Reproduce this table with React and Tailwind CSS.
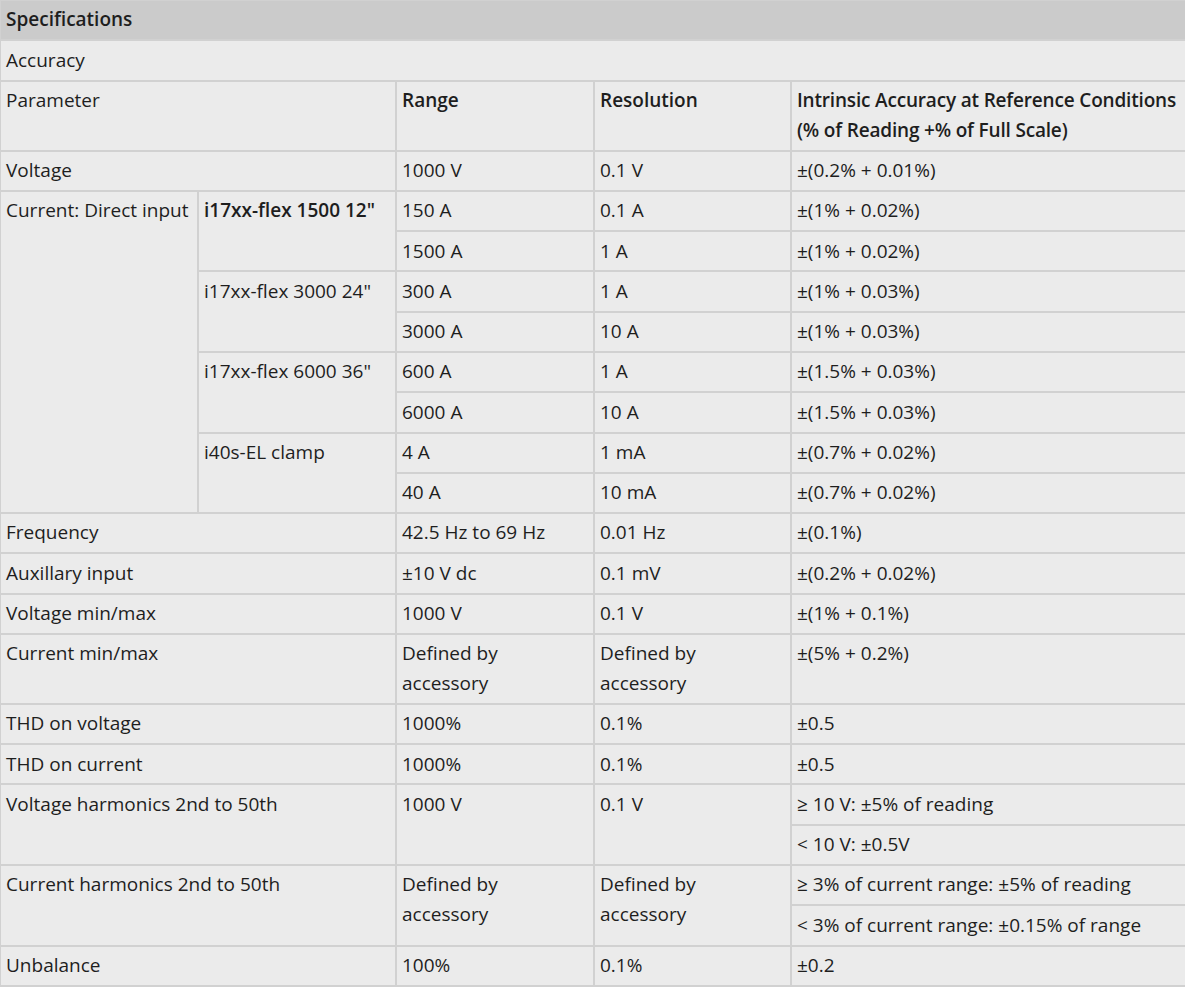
import React from "react";

const td = "border-2 border-[#d1d1d1] align-top pl-[5px] pr-[9px] pt-[4.4px] pb-[4.2px]";

export default function App() {
  return (
    <div
      className="w-[1185px] bg-white text-[#1e1e1e] text-[19px] leading-[29.7px]"
      style={{ fontFamily: '"Open Sans", "Noto Sans", sans-serif' }}
    >
      <table className="w-[1187px] table-fixed border-collapse bg-[#ebebeb] -ml-px -mt-px">
        <colgroup>
          <col className="w-[198px]" />
          <col className="w-[198px]" />
          <col className="w-[198px]" />
          <col className="w-[197px]" />
          <col className="w-[198px]" />
          <col className="w-[198px]" />
        </colgroup>
        <tbody>
          <tr>
            <td colSpan={6} className={`${td} bg-[#cbcbcb] font-semibold`}>
              Specifications
            </td>
          </tr>
          <tr>
            <td colSpan={6} className={td}>Accuracy</td>
          </tr>
          <tr>
            <td colSpan={2} className={td}>Parameter</td>
            <td className={`${td} font-semibold`}>Range</td>
            <td className={`${td} font-semibold`}>Resolution</td>
            <td colSpan={2} className={`${td} font-semibold whitespace-nowrap tracking-[-0.18px]`}>
              Intrinsic Accuracy at Reference Conditions
              <br />
              (% of Reading +% of Full Scale)
            </td>
          </tr>
          <tr>
            <td colSpan={2} className={td}>Voltage</td>
            <td className={td}>1000 V</td>
            <td className={td}>0.1 V</td>
            <td colSpan={2} className={td}>±(0.2% + 0.01%)</td>
          </tr>
          <tr>
            <td rowSpan={8} className={`${td} whitespace-nowrap`}>Current: Direct input</td>
            <td rowSpan={2} className={`${td} font-semibold whitespace-nowrap`}>i17xx-flex 1500 12"</td>
            <td className={td}>150 A</td>
            <td className={td}>0.1 A</td>
            <td colSpan={2} className={td}>±(1% + 0.02%)</td>
          </tr>
          <tr>
            <td className={td}>1500 A</td>
            <td className={td}>1 A</td>
            <td colSpan={2} className={td}>±(1% + 0.02%)</td>
          </tr>
          <tr>
            <td rowSpan={2} className={`${td} whitespace-nowrap`}>i17xx-flex 3000 24"</td>
            <td className={td}>300 A</td>
            <td className={td}>1 A</td>
            <td colSpan={2} className={td}>±(1% + 0.03%)</td>
          </tr>
          <tr>
            <td className={td}>3000 A</td>
            <td className={td}>10 A</td>
            <td colSpan={2} className={td}>±(1% + 0.03%)</td>
          </tr>
          <tr>
            <td rowSpan={2} className={`${td} whitespace-nowrap`}>i17xx-flex 6000 36"</td>
            <td className={td}>600 A</td>
            <td className={td}>1 A</td>
            <td colSpan={2} className={td}>±(1.5% + 0.03%)</td>
          </tr>
          <tr>
            <td className={td}>6000 A</td>
            <td className={td}>10 A</td>
            <td colSpan={2} className={td}>±(1.5% + 0.03%)</td>
          </tr>
          <tr>
            <td rowSpan={2} className={td}>i40s-EL clamp</td>
            <td className={td}>4 A</td>
            <td className={td}>1 mA</td>
            <td colSpan={2} className={td}>±(0.7% + 0.02%)</td>
          </tr>
          <tr>
            <td className={td}>40 A</td>
            <td className={td}>10 mA</td>
            <td colSpan={2} className={td}>±(0.7% + 0.02%)</td>
          </tr>
          <tr>
            <td colSpan={2} className={td}>Frequency</td>
            <td className={`${td} whitespace-nowrap`}>42.5 Hz to 69 Hz</td>
            <td className={td}>0.01 Hz</td>
            <td colSpan={2} className={td}>±(0.1%)</td>
          </tr>
          <tr>
            <td colSpan={2} className={td}>Auxillary input</td>
            <td className={td}>±10 V dc</td>
            <td className={td}>0.1 mV</td>
            <td colSpan={2} className={td}>±(0.2% + 0.02%)</td>
          </tr>
          <tr>
            <td colSpan={2} className={td}>Voltage min/max</td>
            <td className={td}>1000 V</td>
            <td className={td}>0.1 V</td>
            <td colSpan={2} className={td}>±(1% + 0.1%)</td>
          </tr>
          <tr>
            <td colSpan={2} className={td}>Current min/max</td>
            <td className={td}>Defined by<br />accessory</td>
            <td className={td}>Defined by<br />accessory</td>
            <td colSpan={2} className={td}>±(5% + 0.2%)</td>
          </tr>
          <tr>
            <td colSpan={2} className={td}>THD on voltage</td>
            <td className={td}>1000%</td>
            <td className={td}>0.1%</td>
            <td colSpan={2} className={td}>±0.5</td>
          </tr>
          <tr>
            <td colSpan={2} className={td}>THD on current</td>
            <td className={td}>1000%</td>
            <td className={td}>0.1%</td>
            <td colSpan={2} className={td}>±0.5</td>
          </tr>
          <tr>
            <td colSpan={2} rowSpan={2} className={td}>Voltage harmonics 2nd to 50th</td>
            <td rowSpan={2} className={td}>1000 V</td>
            <td rowSpan={2} className={td}>0.1 V</td>
            <td colSpan={2} className={td}>≥ 10 V: ±5% of reading</td>
          </tr>
          <tr>
            <td colSpan={2} className={td}>&lt; 10 V: ±0.5V</td>
          </tr>
          <tr>
            <td colSpan={2} rowSpan={2} className={td}>Current harmonics 2nd to 50th</td>
            <td rowSpan={2} className={td}>Defined by<br />accessory</td>
            <td rowSpan={2} className={td}>Defined by<br />accessory</td>
            <td colSpan={2} className={td}>≥ 3% of current range: ±5% of reading</td>
          </tr>
          <tr>
            <td colSpan={2} className={td}>&lt; 3% of current range: ±0.15% of range</td>
          </tr>
          <tr>
            <td colSpan={2} className={td}>Unbalance</td>
            <td className={td}>100%</td>
            <td className={td}>0.1%</td>
            <td colSpan={2} className={td}>±0.2</td>
          </tr>
        </tbody>
      </table>
    </div>
  );
}
